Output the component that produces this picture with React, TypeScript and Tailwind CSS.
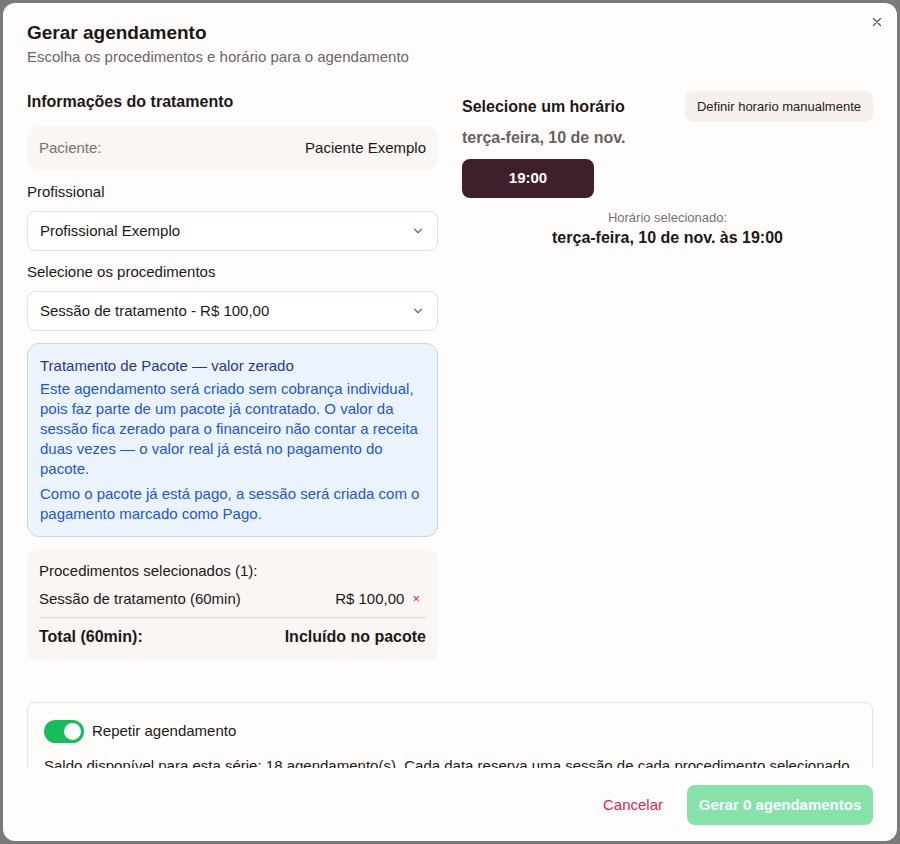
import React from "react";

const F = { fontFamily: '"Liberation Sans", Arial, sans-serif' };

function Chevron() {
  return (
    <svg width="14" height="14" viewBox="0 0 24 24" fill="none" stroke="#6b6262" strokeWidth="2" strokeLinecap="round" strokeLinejoin="round">
      <path d="m6 9 6 6 6-6" />
    </svg>
  );
}

export default function App() {
  return (
    <div className="w-[900px] h-[844px] bg-[#7a7a7a] p-[3px]" style={F}>
      <div className="relative w-[894px] h-[838px] bg-[#fefdfc] rounded-[12px] flex flex-col text-[#1f1717] overflow-hidden">
        <button className="absolute right-[13px] top-[12px] text-[#555]">
          <svg width="14" height="14" viewBox="0 0 24 24" fill="none" stroke="currentColor" strokeWidth="2" strokeLinecap="round">
            <path d="M18 6 6 18M6 6l12 12" />
          </svg>
        </button>
        <div className="px-6 pt-[18px]">
          <h2 className="text-[19px] font-semibold leading-[24px]">Gerar agendamento</h2>
          <p className="text-[15px] text-[#6d6464] leading-[20px] mt-[2px]">Escolha os procedimentos e horário para o agendamento</p>
        </div>
        <div className="flex-1 overflow-hidden px-6 pt-[23px]">
          <div className="grid grid-cols-2 gap-6">
            {/* Left */}
            <div className="flex flex-col">
              <h3 className="text-[16px] font-semibold leading-[24px]">Informações do tratamento</h3>
              <div className="mt-[12px] h-[44px] rounded-[10px] bg-[#faf6f4] px-3 flex items-center justify-between text-[15px]">
                <span className="text-[#7a7070]">Paciente:</span>
                <span>Paciente Exemplo</span>
              </div>
              <label className="mt-[12px] text-[15px] leading-[20px]">Profissional</label>
              <div className="mt-[9px] h-[40px] rounded-[8px] border border-[#e6dfdc] bg-white px-3 flex items-center justify-between text-[15px]">
                <span>Profissional Exemplo</span>
                <Chevron />
              </div>
              <label className="mt-[11px] text-[15px] leading-[20px]">Selecione os procedimentos</label>
              <div className="mt-[9px] h-[40px] rounded-[8px] border border-[#e6dfdc] bg-white px-3 flex items-center justify-between text-[15px]">
                <span>Sessão de tratamento - R$ 100,00</span>
                <Chevron />
              </div>
              <div className="mt-[12px] rounded-[12px] border border-[#c3d7f2] bg-[#ebf4fe] px-3 pt-[12px] pb-[12px] text-[15px] leading-[20px]">
                <p className="text-[#1e3a8a]">Tratamento de Pacote — valor zerado</p>
                <p className="text-[#1d56d8] mt-[3px]">Este agendamento será criado sem cobrança individual, pois faz parte de um pacote já contratado. O valor da sessão fica zerado para o financeiro não contar a receita duas vezes — o valor real já está no pagamento do pacote.</p>
                <p className="text-[#1d56d8] mt-[5px]">Como o pacote já está pago, a sessão será criada com o pagamento marcado como Pago.</p>
              </div>
              <div className="mt-[12px] rounded-[10px] bg-[#faf6f4] px-3 pt-[12px] pb-[12px]">
                <p className="text-[15px] leading-[20px]">Procedimentos selecionados (1):</p>
                <div className="mt-[8px] flex items-center justify-between text-[15px] leading-[20px]">
                  <span>Sessão de tratamento (60min)</span>
                  <span className="flex items-center gap-[8px]">
                    R$ 100,00
                    <span className="text-[#e11d48] text-[13px] pr-[6px]">×</span>
                  </span>
                </div>
                <div className="mt-[8px] border-t border-[#e2dbd8]" />
                <div className="mt-[7px] flex items-center justify-between text-[16px] font-semibold leading-[24px]">
                  <span>Total (60min):</span>
                  <span>Incluído no pacote</span>
                </div>
              </div>
            </div>
            {/* Right */}
            <div className="flex flex-col">
              <div className="flex items-center justify-between pt-[1px]">
                <h3 className="text-[16px] font-semibold leading-[24px]">Selecione um horário</h3>
                <button className="h-[31px] px-3 rounded-[8px] bg-[#f6f0ed] text-[13px] text-[#2a2020]">Definir horario manualmente</button>
              </div>
              <p className="mt-[4px] text-[16px] font-semibold text-[#6b5f5f] leading-[24px]">terça-feira, 10 de nov.</p>
              <button className="mt-[9px] w-[132px] h-[39px] rounded-[8px] bg-[#3e1f2b] text-white text-[15px] font-semibold">19:00</button>
              <div className="mt-[11px] text-center">
                <p className="text-[13px] text-[#7a7070] leading-[18px]">Horário selecionado:</p>
                <p className="text-[16px] font-semibold leading-[22px]">terça-feira, 10 de nov. às 19:00</p>
              </div>
            </div>
          </div>
          <div className="mt-[41px] rounded-[8px] border border-[#ebe1e1] px-4 pt-[17px] pb-4">
            <div className="flex items-center gap-2">
              <div className="w-[40px] h-[23px] rounded-full bg-[#16be5a] flex items-center justify-end px-[3px]">
                <div className="w-[17px] h-[17px] rounded-full bg-white" />
              </div>
              <span className="text-[15px]">Repetir agendamento</span>
            </div>
            <p className="mt-[13px] text-[15px] leading-[20px]">Saldo disponível para esta série: 18 agendamento(s). Cada data reserva uma sessão de cada procedimento selecionado.</p>
          </div>
        </div>
        <div className="h-[73px] px-6 pt-[17px] flex items-start justify-end gap-6">
          <button className="h-[40px] text-[15px] text-[#e11d5a]">Cancelar</button>
          <button className="h-[40px] w-[186px] rounded-[8px] bg-[#87e2aa] text-white text-[15px] font-semibold">Gerar 0 agendamentos</button>
        </div>
      </div>
    </div>
  );
}
